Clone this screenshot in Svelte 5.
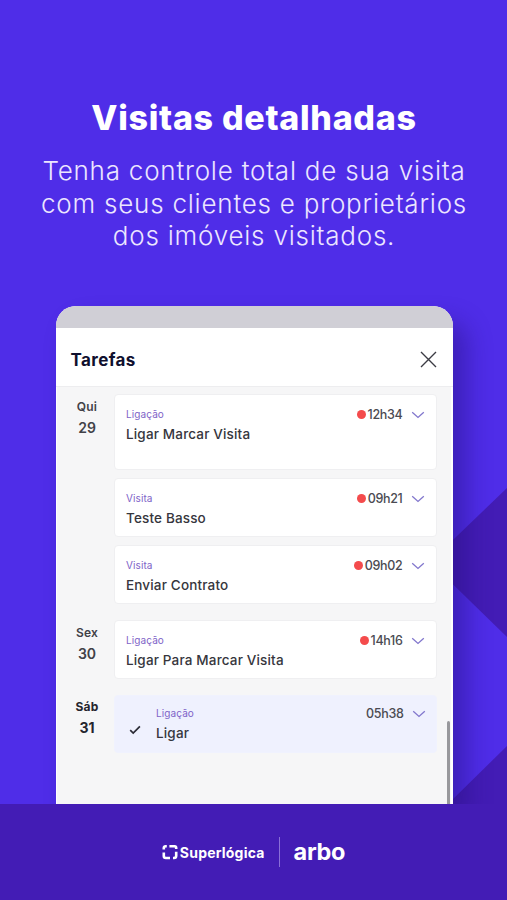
<script>
  const days = [
    {
      name: 'Qui',
      number: 29,
      tasks: [
        { kind: 'Ligação', title: 'Ligar Marcar Visita', time: '12h34', late: true, tall: true },
        { kind: 'Visita', title: 'Teste Basso', time: '09h21', late: true },
        { kind: 'Visita', title: 'Enviar Contrato', time: '09h02', late: true }
      ]
    },
    {
      name: 'Sex',
      number: 30,
      tasks: [{ kind: 'Ligação', title: 'Ligar Para Marcar Visita', time: '14h16', late: true }]
    },
    {
      name: 'Sáb',
      number: 31,
      strong: true,
      tasks: [{ kind: 'Ligação', title: 'Ligar', time: '05h38', done: true }]
    }
  ];
</script>

<main class="promo">
  <svg class="backdrop" viewBox="0 0 507 900" aria-hidden="true">
    <path d="M507 488 L430 562 L507 637 Z" />
    <path d="M507 746 L448 804 H507 Z" />
  </svg>

  <header class="intro">
    <h1>Visitas detalhadas</h1>
    <p>
      Tenha controle total de sua visita<br />
      com seus clientes e proprietários<br />
      dos imóveis visitados.
    </p>
  </header>

  <section class="panel">
    <div class="status-bar"></div>
    <div class="panel-header">
      <h2>Tarefas</h2>
      <button class="close" aria-label="Fechar">
        <svg width="17" height="17" viewBox="0 0 17 17">
          <path d="M1 1 L16 16 M16 1 L1 16" />
        </svg>
      </button>
    </div>

    <div class="list">
      {#each days as day}
        <div class="day">
          <div class="date" class:strong={day.strong}>
            <span class="name">{day.name}</span>
            <span class="number">{day.number}</span>
          </div>
          <div class="tasks">
            {#each day.tasks as task}
              <article class="card" class:tall={task.tall} class:done={task.done}>
                {#if task.done}
                  <svg class="check" width="12" height="10" viewBox="0 0 12 10">
                    <path d="M1.2 5.2 L4.2 8.1 L10.9 1.4" />
                  </svg>
                {/if}
                <div class="text">
                  <span class="kind">{task.kind}</span>
                  <span class="title">{task.title}</span>
                </div>
                <div class="when">
                  {#if task.late}<i class="dot"></i>{/if}
                  <span class="time">{task.time}</span>
                  <svg class="chevron" width="14" height="8" viewBox="0 0 14 8">
                    <path d="M1.2 1.2 L7 6.4 L12.8 1.2" />
                  </svg>
                </div>
              </article>
            {/each}
          </div>
        </div>
      {/each}
      <div class="scrollbar"></div>
    </div>
  </section>

  <footer class="brands">
    <div class="superlogica">
      <svg width="16" height="16" viewBox="0 0 16 16">
        <path d="M1.8 5.4 V4 Q1.8 2.3 3.6 2.3 H4.8" />
        <path d="M7.4 2.3 H12.6 Q14.2 2.3 14.2 4 V5" />
        <path d="M14.2 7.8 V11.8 Q14.2 14 12 14 H11" />
        <path d="M8 14 H3.8 Q1.8 14 1.8 12 V8.6" />
      </svg>
      <span>Superlógica</span>
    </div>
    <div class="divider"></div>
    <span class="arbo">arbo</span>
  </footer>
</main>

<style>
  :global(body) {
    margin: 0;
  }

  .promo {
    position: relative;
    display: flex;
    flex-direction: column;
    align-items: center;
    width: 507px;
    height: 900px;
    overflow: hidden;
    background: #4f2de8;
    font-family: Inter, 'Open Sans', sans-serif;
  }

  .backdrop {
    position: absolute;
    inset: 0;
    fill: #431cb5;
  }

  .intro {
    position: relative;
    height: 306px;
    padding: 96px 0 0 1px;
    box-sizing: border-box;
    color: #fff;
    text-align: center;
    white-space: nowrap;
  }

  h1 {
    margin: 0;
    font-size: 34px;
    line-height: 44px;
    font-weight: 800;
    letter-spacing: 0.7px;
  }

  p {
    margin: 15px 0 0;
    color: #ece6ff;
    font-size: 26px;
    line-height: 32.5px;
    font-weight: 300;
    letter-spacing: 0.78px;
  }

  .panel {
    position: relative;
    display: flex;
    flex-direction: column;
    width: 397px;
    height: 498px;
    margin-left: 1px;
    box-sizing: border-box;
    border-radius: 20px 20px 0 0;
    background: #fff;
    box-shadow: 14px 16px 24px rgba(35, 15, 120, 0.42);
  }

  .status-bar {
    height: 22px;
    border-radius: 20px 20px 0 0;
    background: #d0cfd6;
  }

  .panel-header {
    display: flex;
    align-items: center;
    justify-content: space-between;
    height: 59px;
    padding: 5px 16px 0 15px;
    box-sizing: border-box;
    border-bottom: 1px solid #ededef;
  }

  h2 {
    margin: 0;
    color: #10102e;
    font-size: 17px;
    font-weight: 700;
    letter-spacing: 0.4px;
  }

  .close {
    display: flex;
    padding: 0;
    border: 0;
    background: none;
  }

  svg {
    fill: none;
  }

  .backdrop path {
    fill: #431cb5;
  }

  .close path {
    stroke: #3c3c44;
    stroke-width: 1.4;
  }

  .list {
    position: relative;
    display: flex;
    flex: 1;
    flex-direction: column;
    gap: 16px;
    margin: 0 2px 0 1px;
    padding-top: 7px;
    background: #f6f6f7;
  }

  .day {
    display: flex;
  }

  .date {
    display: flex;
    flex-direction: column;
    align-items: center;
    width: 61px;
    margin-right: -4px;
    padding-top: 2px;
    color: #414147;
    font-weight: 600;
  }

  .date.strong {
    padding-top: 1px;
    color: #25252d;
    font-weight: 700;
  }

  .name {
    font-size: 12px;
    line-height: 21px;
    letter-spacing: 0.2px;
  }

  .number {
    font-size: 14px;
    line-height: 21px;
  }

  .tasks {
    display: flex;
    flex-direction: column;
    gap: 8px;
    width: 323px;
  }

  .card {
    display: flex;
    align-items: flex-start;
    height: 59px;
    padding: 10px 11px 0 11.5px;
    box-sizing: border-box;
    border: 1px solid #efeff1;
    border-radius: 4px;
    background: #fff;
  }

  .card.tall {
    height: 76px;
  }

  .card.done {
    height: 58px;
    padding-top: 8px;
    padding-right: 10px;
    border-color: #f0f2fe;
    background: #eff1fe;
  }

  .check {
    margin: 21px 15.5px 0 2.5px;
    stroke: #2b2b35;
    stroke-width: 1.7;
  }

  .text {
    display: flex;
    flex: 1;
    flex-direction: column;
  }

  .kind {
    color: #8064c8;
    font-size: 10px;
    line-height: 19px;
    letter-spacing: 0.1px;
  }

  .title {
    color: #36363d;
    font-size: 13.5px;
    line-height: 20px;
    font-weight: 500;
    letter-spacing: 0.16px;
  }

  .when {
    display: flex;
    align-items: center;
    height: 18px;
  }

  .dot {
    width: 9px;
    height: 9px;
    margin-right: 2px;
    border-radius: 50%;
    background: #f44b4c;
  }

  .time {
    color: #4b4b52;
    font-size: 12.5px;
    font-weight: 500;
    letter-spacing: -0.3px;
  }

  .chevron {
    margin: 2px 0 0 8px;
    stroke: #8277cd;
    stroke-width: 1.3;
  }

  .scrollbar {
    position: absolute;
    right: 1px;
    bottom: 0;
    width: 3px;
    height: 83px;
    border-radius: 2px 2px 0 0;
    background: #98989c;
  }

  .brands {
    position: relative;
    display: flex;
    align-items: center;
    justify-content: center;
    width: 100%;
    height: 96px;
    background: #431cb5;
    color: #fff;
  }

  .superlogica {
    display: flex;
    align-items: center;
    gap: 2px;
    font-size: 14px;
    font-weight: 700;
    letter-spacing: 0.2px;
  }

  .superlogica svg {
    stroke: #fff;
    stroke-width: 2.6;
  }

  .divider {
    width: 1px;
    height: 30px;
    margin: 0 14px;
    background: #8a6fd8;
  }

  .arbo {
    font-size: 23.5px;
    line-height: 28px;
    font-weight: 700;
    letter-spacing: -0.3px;
  }
</style>
